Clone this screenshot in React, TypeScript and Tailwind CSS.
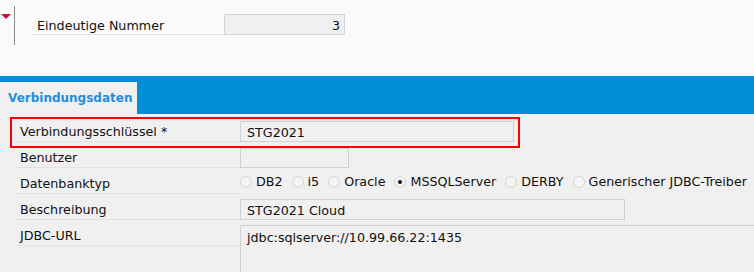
import React from "react";

const font = { fontFamily: '"DejaVu Sans", Tahoma, sans-serif' };

function Radio({ label, checked }: { label: string; checked?: boolean }) {
  return (
    <div className="flex items-center gap-[4px]">
      <span className="w-[12px] h-[12px] rounded-full border border-[#d6d6d6] bg-[#f4f4f4] flex items-center justify-center">
        {checked && <span className="w-[4px] h-[4px] rounded-full bg-black" />}
      </span>
      <span>{label}</span>
    </div>
  );
}

function Label({ text }: { text: string }) {
  return (
    <div className="w-[225px] ml-[15px] h-[26px] border-b border-[#e2e2e2] flex items-center pt-[6px] pl-[5px] shrink-0">
      {text}
    </div>
  );
}

export default function App() {
  return (
    <div className="w-[754px] h-[272px] overflow-hidden bg-[#f0f0f0] text-[12.7px] text-[#111] relative" style={font}>
      {/* Header area */}
      <div className="h-[76px] bg-[#fafafa] flex">
        <div className="w-[14px] relative">
          <div className="absolute left-[1px] top-[14px] w-0 h-0 border-l-[5px] border-r-[5px] border-t-[5px] border-l-transparent border-r-transparent border-t-[#c8102e]" />
        </div>
        <div className="w-px h-[39px] mt-[6px] bg-[#8a8a8a]" />
        <div className="flex items-end h-[35px] ml-[17px]">
          <div className="w-[192px] h-[21px] border-b border-[#e2e2e2] flex items-center pt-[3px] pl-[5px]">Eindeutige Nummer</div>
          <div className="w-[121px] h-[21px] border border-[#d4d4d4] bg-[#f0f0f0] flex items-center justify-end pt-[2px] pr-[4px]">3</div>
        </div>
      </div>

      {/* Tab bar */}
      <div className="h-[38px] bg-[#008ed8] flex items-end">
        <div className="w-[137px] h-[32px] bg-[#f0f0f0] flex items-center pl-[8px] font-bold text-[#1f8fd8] text-[12px]">
          Verbindungsdaten
        </div>
      </div>

      {/* Form */}
      <div className="pt-[2px]">
        <div className="h-[26px] flex items-end">
          <Label text="Verbindungsschlüssel *" />
          <div className="w-[274px] h-[21px] border border-[#d0d0d0] flex items-center pt-[2px] pl-[6px]">STG2021</div>
        </div>
        <div className="h-[26px] flex items-end">
          <Label text="Benutzer" />
          <div className="w-[109px] h-[20px] border border-[#d0d0d0]" />
        </div>
        <div className="h-[26px] flex items-end">
          <Label text="Datenbanktyp" />
          <div className="h-full flex items-center gap-[9px] pt-[2px]">
            <Radio label="DB2" />
            <Radio label="i5" />
            <Radio label="Oracle" />
            <Radio label="MSSQLServer" checked />
            <Radio label="DERBY" />
            <Radio label="Generischer JDBC-Treiber" />
          </div>
        </div>
        <div className="h-[26px] flex items-end">
          <Label text="Beschreibung" />
          <div className="w-[385px] h-[21px] border border-[#d0d0d0] flex items-center pt-[2px] pl-[6px]">STG2021 Cloud</div>
        </div>
        <div className="h-[26px] flex items-start">
          <Label text="JDBC-URL" />
          <div className="flex-1 h-[60px] mt-[5px] border-l border-t border-[#d0d0d0] pl-[6px] pt-[2px]">
            jdbc:sqlserver://10.99.66.22:1435
          </div>
        </div>
      </div>

      {/* Red highlight annotation */}
      <div className="absolute left-[10px] top-[117px] w-[510px] h-[31px] border-2 border-[#ff0000] pointer-events-none" />
    </div>
  );
}
